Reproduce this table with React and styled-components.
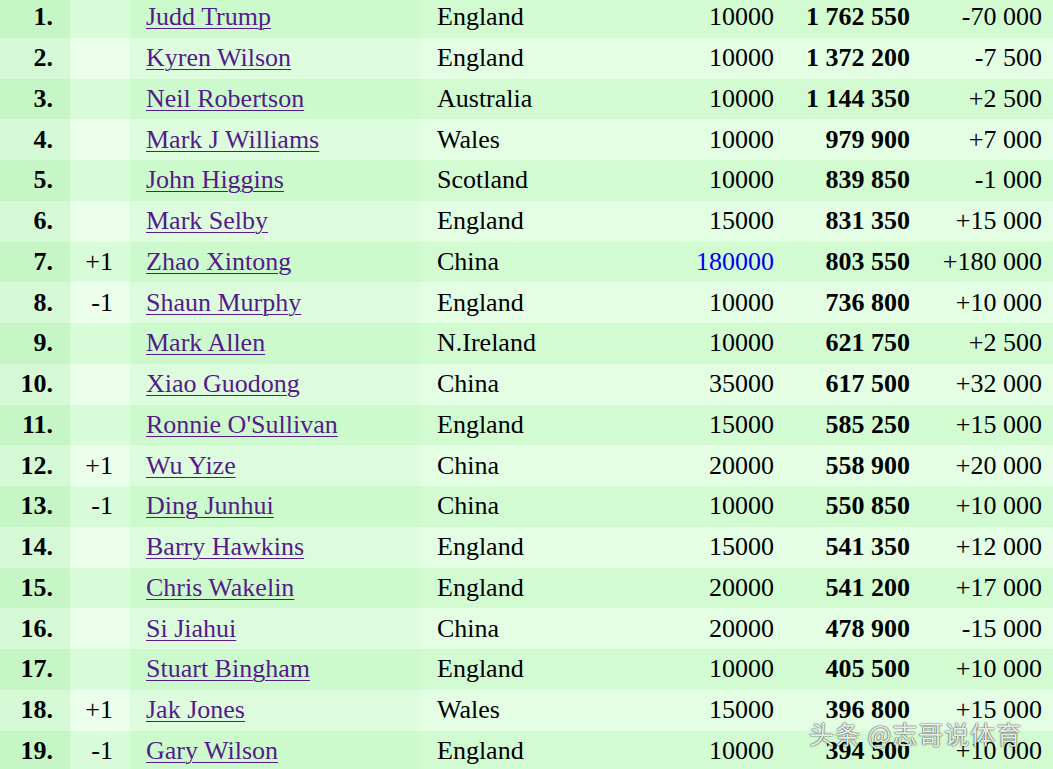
import styled, { createGlobalStyle } from "styled-components";

const GlobalStyle = createGlobalStyle`
  html, body {
    margin: 0;
    padding: 0;
    overflow: hidden;
    background: #ffffff;
  }
`;

const players = [
  { rank: 1, change: "", name: "Judd Trump", country: "England", points: "10000", total: "1 762 550", diff: "-70 000" },
  { rank: 2, change: "", name: "Kyren Wilson", country: "England", points: "10000", total: "1 372 200", diff: "-7 500" },
  { rank: 3, change: "", name: "Neil Robertson", country: "Australia", points: "10000", total: "1 144 350", diff: "+2 500" },
  { rank: 4, change: "", name: "Mark J Williams", country: "Wales", points: "10000", total: "979 900", diff: "+7 000" },
  { rank: 5, change: "", name: "John Higgins", country: "Scotland", points: "10000", total: "839 850", diff: "-1 000" },
  { rank: 6, change: "", name: "Mark Selby", country: "England", points: "15000", total: "831 350", diff: "+15 000" },
  { rank: 7, change: "+1", name: "Zhao Xintong", country: "China", points: "180000", total: "803 550", diff: "+180 000", highlight: true },
  { rank: 8, change: "-1", name: "Shaun Murphy", country: "England", points: "10000", total: "736 800", diff: "+10 000" },
  { rank: 9, change: "", name: "Mark Allen", country: "N.Ireland", points: "10000", total: "621 750", diff: "+2 500" },
  { rank: 10, change: "", name: "Xiao Guodong", country: "China", points: "35000", total: "617 500", diff: "+32 000" },
  { rank: 11, change: "", name: "Ronnie O'Sullivan", country: "England", points: "15000", total: "585 250", diff: "+15 000" },
  { rank: 12, change: "+1", name: "Wu Yize", country: "China", points: "20000", total: "558 900", diff: "+20 000" },
  { rank: 13, change: "-1", name: "Ding Junhui", country: "China", points: "10000", total: "550 850", diff: "+10 000" },
  { rank: 14, change: "", name: "Barry Hawkins", country: "England", points: "15000", total: "541 350", diff: "+12 000" },
  { rank: 15, change: "", name: "Chris Wakelin", country: "England", points: "20000", total: "541 200", diff: "+17 000" },
  { rank: 16, change: "", name: "Si Jiahui", country: "China", points: "20000", total: "478 900", diff: "-15 000" },
  { rank: 17, change: "", name: "Stuart Bingham", country: "England", points: "10000", total: "405 500", diff: "+10 000" },
  { rank: 18, change: "+1", name: "Jak Jones", country: "Wales", points: "15000", total: "396 800", diff: "+15 000" },
  { rank: 19, change: "-1", name: "Gary Wilson", country: "England", points: "10000", total: "394 500", diff: "+10 000" },
];

// column widths, left to right
const columns = [70, 60, 290, 220, 150, 136, 127];

// shades per column: [odd row, even row]
const shades = {
  rank: ["#c6f6c6", "#d4f9d4"],
  change: ["#d8fbd8", "#ebffeb"],
  name: ["#ccfacc", "#ddfcdd"],
  rest: ["#d2fbd2", "#e3fee3"],
};

const Styled = {};

Styled.Page = styled.div`
  position: relative;
  width: 1053px;
  height: 769px;
  overflow: hidden;
`;

Styled.Table = styled.table`
  width: 1053px;
  margin-top: -3px;
  border-collapse: collapse;
  table-layout: fixed;
  font-family: "Liberation Serif", "Times New Roman", serif;
  font-size: 26px;
  color: #000;
`;

Styled.Col = styled.col`
  width: ${(p) => p.$w}px;
`;

Styled.Row = styled.tr`
  height: 40.75px;
`;

Styled.Cell = styled.td`
  padding: 0 ${(p) => p.$pr || 0}px 0 ${(p) => p.$pl || 0}px;
  text-align: ${(p) => p.$align || "left"};
  font-weight: ${(p) => (p.$bold ? 700 : 400)};
  background: ${(p) => shades[p.$kind][p.$odd ? 0 : 1]};
  white-space: nowrap;
  vertical-align: middle;
  line-height: 30px;
`;

Styled.PlayerLink = styled.a`
  color: #551a8b;
  text-decoration: underline;
  text-underline-offset: 3px;
  text-decoration-thickness: 1px;
`;

Styled.Points = styled.span`
  color: ${(p) => (p.$highlight ? "#0000ee" : "#000")};
`;

Styled.Watermark = styled.div`
  position: absolute;
  left: 809px;
  top: 715px;
  font-family: "Noto Sans CJK SC", "Noto Sans", sans-serif;
  font-size: 25px;
  letter-spacing: 1px;
  color: rgba(255, 255, 255, 0.92);
  text-shadow: 0 0 1px rgba(0, 0, 0, 0.8), 0 0 2px rgba(0, 0, 0, 0.55);
  white-space: nowrap;
`;

const App = () => {
  return (
    <Styled.Page>
      <GlobalStyle />
      <Styled.Table>
        <colgroup>
          {columns.map((w, i) => (
            <Styled.Col key={i} $w={w} />
          ))}
        </colgroup>
        <tbody>
          {players.map((p) => {
            const odd = p.rank % 2 === 1;
            return (
              <Styled.Row key={p.rank}>
                <Styled.Cell $kind="rank" $odd={odd} $align="right" $pr={17} $bold>
                  {p.rank}.
                </Styled.Cell>
                <Styled.Cell $kind="change" $odd={odd} $align="right" $pr={17}>
                  {p.change}
                </Styled.Cell>
                <Styled.Cell $kind="name" $odd={odd} $pl={16}>
                  <Styled.PlayerLink href="#">{p.name}</Styled.PlayerLink>
                </Styled.Cell>
                <Styled.Cell $kind="rest" $odd={odd} $pl={17}>
                  {p.country}
                </Styled.Cell>
                <Styled.Cell $kind="rest" $odd={odd} $align="right" $pr={16}>
                  <Styled.Points $highlight={p.highlight}>{p.points}</Styled.Points>
                </Styled.Cell>
                <Styled.Cell $kind="rest" $odd={odd} $align="right" $pr={16} $bold>
                  {p.total}
                </Styled.Cell>
                <Styled.Cell $kind="rest" $odd={odd} $align="right" $pr={11}>
                  {p.diff}
                </Styled.Cell>
              </Styled.Row>
            );
          })}
        </tbody>
      </Styled.Table>
      <Styled.Watermark>头条 @志哥说体育</Styled.Watermark>
    </Styled.Page>
  );
};

export default App;
